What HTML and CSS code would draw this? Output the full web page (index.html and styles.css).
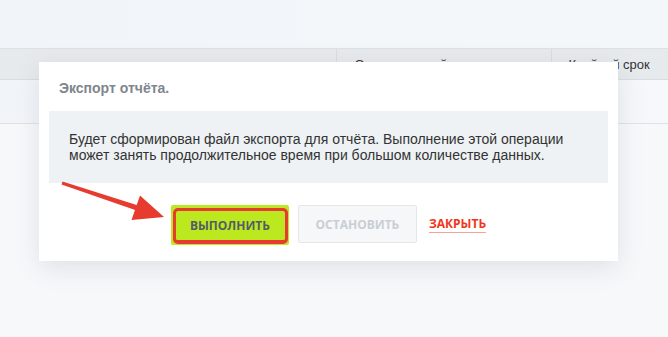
FILE: index.html
```html
<!DOCTYPE html>
<html lang="ru">
<head>
    <meta charset="UTF-8">
    <meta name="viewport" content="width=device-width, initial-scale=1.0">
    <title>Экспорт отчёта</title>
    <link rel="stylesheet" href="styles.css">
</head>
<body>
    <div class="page">
        <div class="topbar"></div>
        <table class="grid">
            <thead>
                <tr>
                    <th class="col-name"></th>
                    <th class="col-resp">Ответственный</th>
                    <th class="col-date">Крайний срок</th>
                </tr>
            </thead>
            <tbody>
                <tr>
                    <td></td>
                    <td></td>
                    <td></td>
                </tr>
            </tbody>
        </table>
    </div>

    <div class="popup">
        <div class="popup-title">Экспорт отчёта.</div>
        <div class="popup-content">
            Будет сформирован файл экспорта для отчёта. Выполнение этой операции
            может занять продолжительное время при большом количестве данных.
        </div>
        <div class="popup-buttons">
            <button class="btn btn-success">ВЫПОЛНИТЬ</button>
            <button class="btn btn-disabled">ОСТАНОВИТЬ</button>
            <a class="btn-link">ЗАКРЫТЬ</a>
        </div>
    </div>

    <!-- стрелка-пометка на скриншоте -->
    <svg class="arrow" width="668" height="337" viewBox="0 0 668 337">
        <polygon points="62.5,181.6 138.2,205.4 136.6,210.6 61.5,184.4" fill="#e63b2e"/>
        <polygon points="164,217 140,195.5 131.5,220" fill="#e63b2e"/>
    </svg>
</body>
</html>
```

FILE: styles.css
```css
* {
    margin: 0;
    padding: 0;
    box-sizing: border-box;
}

body {
    font-family: "Liberation Sans", Arial, sans-serif;
    background: #f7f8fa;
    width: 668px;
    height: 337px;
    overflow: hidden;
    position: relative;
}

.topbar {
    height: 48px;
    background: linear-gradient(to right, #f1f5f9, #f4f7fa);
}

.grid {
    width: 100%;
    border-collapse: collapse;
    table-layout: fixed;
}

.grid th {
    height: 31px;
    background: #e7eaed;
    border-top: 1px solid #dde1e5;
    border-bottom: 1px solid #d9dde1;
    border-left: 1px solid #d9dde1;
    font-size: 13px;
    font-weight: normal;
    color: #333;
    text-align: left;
    padding: 0 18px;
}

.grid th:first-child {
    border-left: none;
}

.col-name {
    width: 336px;
}

.col-resp {
    width: 215px;
}

.col-date {
    padding-left: 17px !important;
}

.grid td {
    height: 44px;
    background: linear-gradient(to right, #f1f5f9, #f6f8fb);
    border-bottom: 1px solid #dfe3e7;
}

.popup {
    position: absolute;
    left: 39px;
    top: 62px;
    width: 579px;
    height: 199px;
    background: #fff;
    padding: 0 10px;
    box-shadow: 0 7px 24px rgba(83, 92, 105, 0.14);
}

.popup-title {
    padding: 17px 10px 0;
    height: 49px;
    font-size: 14px;
    line-height: 18px;
    font-weight: bold;
    color: #80868e;
}

.popup-content {
    background: #eef2f4;
    padding: 20px;
    font-size: 14px;
    line-height: 16px;
    color: #333;
}

.popup-buttons {
    display: flex;
    justify-content: center;
    align-items: center;
    gap: 9px;
    margin-top: 20px;
    font-family: "Open Sans", "Liberation Sans", sans-serif;
}

.btn {
    height: 38px;
    border-radius: 2px;
    font-family: inherit;
    font-size: 12px;
    font-weight: bold;
    border: 1px solid transparent;
}

.btn-success {
    position: relative;
    width: 118px;
    height: 40px;
    background: #bbe81f;
    color: #535c69;
    margin-top: 2px;
}

.btn-success::after {
    content: "";
    position: absolute;
    left: 1px;
    top: 2px;
    right: 0;
    bottom: 0;
    border: 3px solid #e63b2e;
    border-bottom-width: 4px;
    border-radius: 5px;
}

.btn-disabled {
    width: 119px;
    background: #f6f7f8;
    border-color: #e4e7ea;
    color: #c9ced3;
}

.btn-link {
    margin-left: 3px;
    font-size: 12px;
    font-weight: bold;
    color: #f0371b;
    line-height: 16px;
    border-bottom: 1px solid #f7a394;
    cursor: pointer;
}

.arrow {
    position: absolute;
    left: 0;
    top: 0;
}
```
